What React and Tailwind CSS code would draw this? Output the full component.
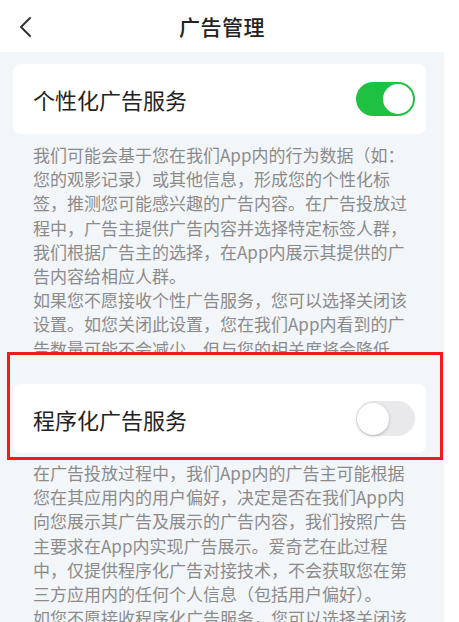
import React from 'react'

const FONT = { fontFamily: '"Noto Sans CJK SC", "Noto Sans", sans-serif' }

const PERSONAL_LINES = [
  '我们可能会基于您在我们App内的行为数据（如：',
  '您的观影记录）或其他信息，形成您的个性化标',
  '签，推测您可能感兴趣的广告内容。在广告投放过',
  '程中，广告主提供广告内容并选择特定标签人群，',
  '我们根据广告主的选择，在App内展示其提供的广',
  '告内容给相应人群。',
  '如果您不愿接收个性广告服务，您可以选择关闭该',
  '设置。如您关闭此设置，您在我们App内看到的广',
  '告数量可能不会减少，但与您的相关度将会降低，',
]

const PROGRAM_LINES = [
  '在广告投放过程中，我们App内的广告主可能根据',
  '您在其应用内的用户偏好，决定是否在我们App内',
  '向您展示其广告及展示的广告内容，我们按照广告',
  '主要求在App内实现广告展示。爱奇艺在此过程',
  '中，仅提供程序化广告对接技术，不会获取您在第',
  '三方应用内的任何个人信息（包括用户偏好）。',
  '如您不愿接收程序化广告服务，您可以选择关闭该',
]

function Toggle({ on }) {
  return on ? (
    <div className="w-[59px] h-[34px] rounded-full bg-[#1fc143] flex items-center justify-end pr-[2px]">
      <div className="w-[30px] h-[30px] rounded-full bg-white" />
    </div>
  ) : (
    <div className="w-[59px] h-[35px] rounded-full bg-[#e9e9eb] flex items-center pl-[1px]">
      <div className="w-[32px] h-[32px] rounded-full bg-white shadow-[0_1px_3px_rgba(0,0,0,0.25)]" />
    </div>
  )
}

function SettingCard({ label, on, className = '' }) {
  return (
    <div className={`w-[413px] shrink-0 bg-white rounded-lg flex items-center justify-between pl-[20px] pr-[11px] ${className}`}>
      <span className="text-[22px] leading-none text-[#222]">{label}</span>
      <Toggle on={on} />
    </div>
  )
}

function Paragraph({ lines, className = '' }) {
  return (
    <div className={`shrink-0 pl-[33px] text-[17px] leading-[24.2px] text-[#8b8b8b] ${className}`}>
      {lines.map((l, i) => (
        <div key={i} className="whitespace-nowrap">{l}</div>
      ))}
    </div>
  )
}

export default function App() {
  return (
    <div className="w-[459px] h-[622px] overflow-hidden bg-white" style={FONT}>
      {/* Header */}
      <header className="w-[444px] h-[52px] relative flex items-center justify-center">
        <svg className="absolute left-[18px] top-[16px] w-[16px] h-[22px]" viewBox="0 0 16 22" fill="none">
          <path d="M12 2 L3 11 L12 20" stroke="#333" strokeWidth="2" strokeLinecap="round" strokeLinejoin="round" />
        </svg>
        <h1 className="text-[21px] font-medium text-[#222] tracking-[0.5px] mt-[2px]">广告管理</h1>
      </header>

      <main className="w-[444px] h-[570px] overflow-hidden bg-[#f3f6f9] pt-[12px] flex flex-col">
        <SettingCard label="个性化广告服务" on className="ml-[13px] h-[70px]" />
        <Paragraph lines={PERSONAL_LINES} className="mt-[9px] h-[209px] overflow-hidden" />

        {/* highlighted section */}
        <div className="shrink-0 ml-[7px] w-[436px] h-[108px] border-[3px] border-[#f01c1c] pt-[29px] pl-[3px] bg-[#f3f6f9]">
          <SettingCard label="程序化广告服务" on={false} className="h-[69px]" />
        </div>

        <Paragraph lines={PROGRAM_LINES} className="mt-[1px]" />
      </main>
    </div>
  )
}
